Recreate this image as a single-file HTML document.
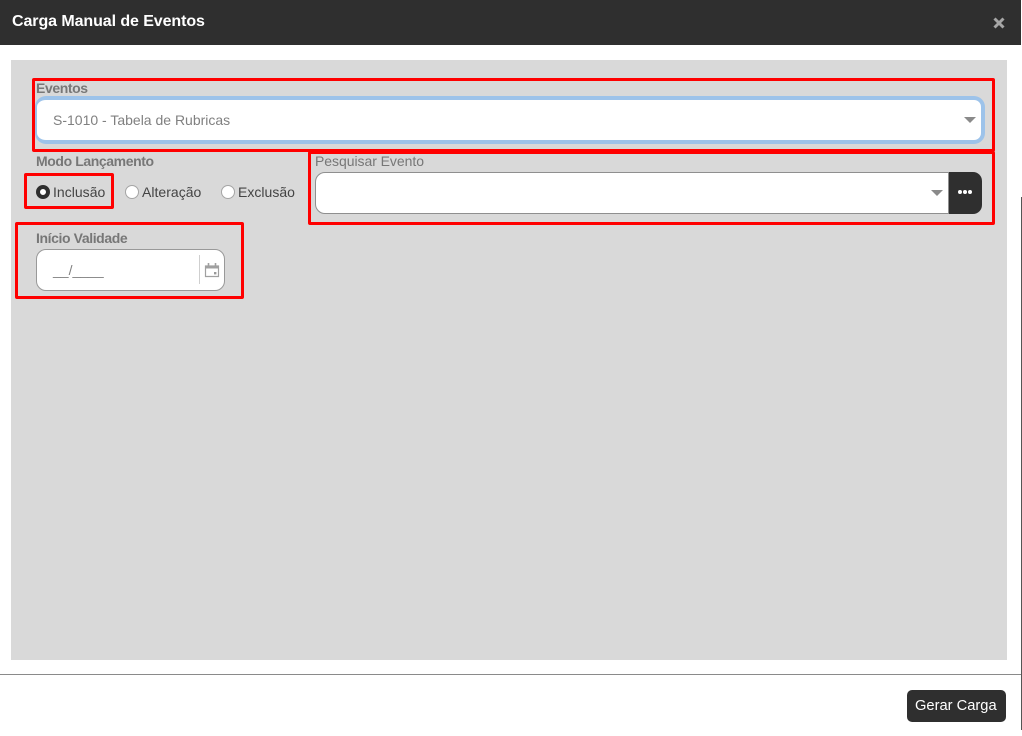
<!DOCTYPE html>
<html lang="pt">
<head>
<meta charset="utf-8">
<title>Carga Manual de Eventos</title>
<style>
html,body{margin:0;padding:0;width:1022px;height:736px;overflow:hidden;background:#fff;font-family:"Liberation Sans",sans-serif}
.a{position:absolute;box-sizing:border-box}
.t{position:absolute;white-space:nowrap;line-height:16px}
.lbl{font-size:14px;color:#777;font-weight:bold;letter-spacing:-.4px}
.red{position:absolute;box-sizing:border-box;border:3px solid #f00;border-radius:2px}
.opt{font-size:14px;color:#444;letter-spacing:.02px}
.radio{position:absolute;box-sizing:border-box;width:14px;height:14px;border-radius:50%;background:#fff;border:1px solid #a5a5a5}
.arrow{position:absolute;width:0;height:0;border-left:6px solid transparent;border-right:6px solid transparent;border-top:6px solid #8a8a8a}
</style>
</head>
<body>
<div class="a" style="left:0;top:0;width:1021px;height:45px;background:#2f2f2f"></div>
<div class="t" style="left:12px;top:14px;font-size:16px;font-weight:bold;color:#fff;letter-spacing:-.08px">Carga Manual de Eventos</div>
<svg class="a" style="left:992px;top:16px" width="14" height="14" viewBox="0 0 14 14"><path d="M2.5 2.5L11.5 11.5M11.5 2.5L2.5 11.5" stroke="#a6a6a6" stroke-width="3" fill="none"/></svg>

<div class="a" style="left:11px;top:60px;width:996px;height:600px;background:#d9d9d9"></div>

<div class="t lbl" style="left:36px;top:80px">Eventos</div>
<div class="a" style="left:35px;top:96px;width:950px;height:48px;background:#fff;border:4px solid #9dc3ea;border-left-width:2px;border-radius:11px"></div>
<div class="t" style="left:53px;top:112px;font-size:14px;color:#808080">S-1010 - Tabela de Rubricas</div>
<div class="arrow" style="left:964px;top:117px"></div>

<div class="t lbl" style="left:36px;top:153px">Modo Lançamento</div>
<div class="radio" style="left:36px;top:185px;border:4px solid #2f2f2f;background:#fff"></div>
<div class="t opt" style="left:53px;top:184px">Inclusão</div>
<div class="radio" style="left:125px;top:185px"></div>
<div class="t opt" style="left:142px;top:184px">Alteração</div>
<div class="radio" style="left:221px;top:185px"></div>
<div class="t opt" style="left:238px;top:184px">Exclusão</div>

<div class="t" style="left:315px;top:153px;font-size:14px;color:#777;letter-spacing:-.05px">Pesquisar Evento</div>
<div class="a" style="left:315px;top:172px;width:640px;height:42px;background:#fff;border:1px solid #8f8f8f;border-radius:10px 0 0 10px"></div>
<div class="arrow" style="left:931px;top:190px"></div>
<div class="a" style="left:948px;top:172px;width:1px;height:42px;background:#8f8f8f"></div>
<div class="a" style="left:949px;top:172px;width:33px;height:42px;background:#2f2f2f;border-radius:0 9px 9px 0"></div>
<svg class="a" style="left:957px;top:189px" width="16" height="6" viewBox="0 0 16 6"><circle cx="3" cy="3" r="2" fill="#fff"/><circle cx="8" cy="3" r="2" fill="#fff"/><circle cx="13" cy="3" r="2" fill="#fff"/></svg>

<div class="t lbl" style="left:36px;top:230px">Início Validade</div>
<div class="a" style="left:36px;top:249px;width:189px;height:42px;background:#fff;border:1px solid #999;border-radius:10px"></div>
<div class="t" style="left:53px;top:262px;font-size:14px;color:#808080">__/____</div>
<div class="a" style="left:199px;top:255px;width:1px;height:29px;background:#cfcfcf"></div>
<svg class="a" style="left:204px;top:262px" width="16" height="16" viewBox="0 0 16 16"><path d="M1.5 4H14.5V14.5H1.5Z" fill="none" stroke="#a0a0a0" stroke-width="1.2"/><path d="M1.5 3.5H14.5V6.5H1.5Z" fill="#a0a0a0"/><path d="M4.5 1V4M11.5 1V4" stroke="#a0a0a0" stroke-width="1.6"/><rect x="10" y="10" width="2.4" height="2.4" fill="#999"/></svg>

<div class="red" style="left:32px;top:78px;width:963px;height:74px"></div>
<div class="red" style="left:308px;top:151px;width:687px;height:74px"></div>
<div class="red" style="left:24px;top:173px;width:90px;height:36px"></div>
<div class="red" style="left:15px;top:222px;width:229px;height:77px"></div>

<div class="a" style="left:0;top:674px;width:1021px;height:1px;background:#8a8a8a"></div>
<div class="a" style="left:907px;top:690px;width:99px;height:32px;background:#2f2f2f;border-radius:5px"></div>
<div class="t" style="left:915px;top:698px;font-size:14.7px;color:#fff;line-height:17px">Gerar Carga</div>

<div class="a" style="left:1021px;top:197px;width:1px;height:533px;background:#555"></div>
</body>
</html>
